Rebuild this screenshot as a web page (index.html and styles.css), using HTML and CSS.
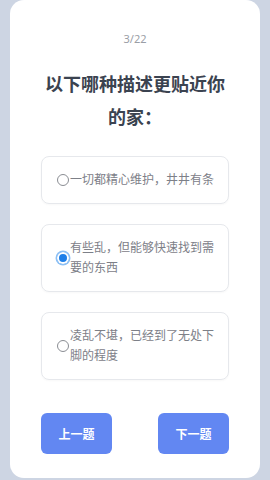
FILE: index.html
```html
<!DOCTYPE html>
<html lang="zh">
<head>
  <meta charset="UTF-8">
  <meta name="viewport" content="width=device-width, initial-scale=1.0">
  <title>问卷</title>
  <link rel="stylesheet" href="styles.css">
</head>
<body>
<div class="card">
  <div class="progress">3/22</div>
  <h1 class="question">以下哪种描述更贴近你的家：</h1>

  <form class="options">
    <label class="option">
      <input type="radio" name="home" value="a">
      <span class="option-text">一切都精心维护，井井有条</span>
    </label>
    <label class="option">
      <input type="radio" name="home" value="b" checked>
      <span class="option-text">有些乱，但能够快速找到需要的东西</span>
    </label>
    <label class="option">
      <input type="radio" name="home" value="c">
      <span class="option-text">凌乱不堪，已经到了无处下脚的程度</span>
    </label>
  </form>

  <div class="button-row">
    <button class="button" type="button">上一题</button>
    <button class="button" type="button">下一题</button>
  </div>
</div>
</body>
</html>
```

FILE: styles.css
```css
html, body {
  margin: 0;
  height: 100%;
}

body {
  background: #cdd5e3;
  font-family: "Noto Sans", "Noto Sans CJK SC", sans-serif;
  padding: 0 10px;
  box-sizing: border-box;
}

.card {
  background: #fff;
  height: 478px;
  border-radius: 14px;
  padding: 31px 31px 0;
  box-sizing: border-box;
}

.progress {
  text-align: center;
  font-size: 11px;
  line-height: 16px;
  color: #9a9ea6;
}

.question {
  margin: 21px 0 0;
  text-align: center;
  font-size: 18px;
  line-height: 33px;
  font-weight: 700;
  color: #3b4350;
}

/* 选项列表 */
.options {
  display: flex;
  flex-direction: column;
  gap: 20px;
  margin-top: 22px;
}

.option {
  display: flex;
  align-items: center;
  padding: 13px 10px 13px 15px;
  border: 1px solid #e6e8ec;
  border-radius: 8px;
  box-shadow: 0 1px 2px rgba(0, 0, 0, 0.03);
}

.option input {
  appearance: none;
  -webkit-appearance: none;
  flex: none;
  width: 12px;
  height: 12px;
  margin: 0 1px 0 0;
  border: 1px solid #8a8d93;
  border-radius: 50%;
  box-sizing: border-box;
}

.option input:checked {
  border: none;
  background: #1f7fe8;
  box-shadow: inset 0 0 0 2px #fff, 0 0 0 1.5px #8cc0f5;
}

.option-text {
  font-size: 12px;
  line-height: 20px;
  color: #7d8088;
}

/* 上一题 / 下一题 */
.button-row {
  display: flex;
  justify-content: space-between;
  margin-top: 33px;
}

.button {
  width: 71px;
  height: 41px;
  border: none;
  border-radius: 6px;
  background: #6287f2;
  color: #fff;
  font-family: inherit;
  font-size: 12px;
  font-weight: 700;
}
```
